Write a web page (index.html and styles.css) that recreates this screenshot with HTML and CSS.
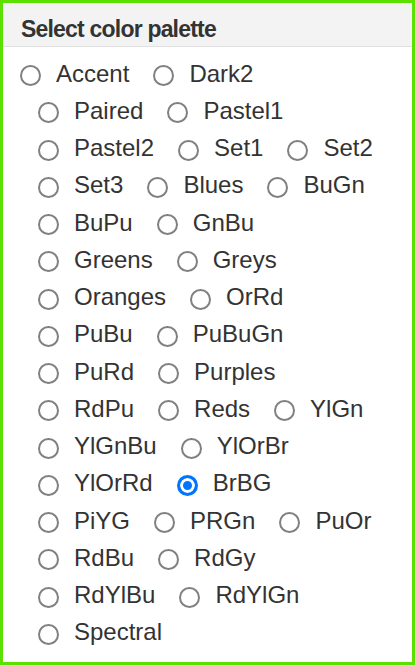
FILE: index.html
```html
<!DOCTYPE html>
<html>
<head>
<meta charset="utf-8">
<link rel="stylesheet" href="styles.css">
</head>
<body>
<div class="panel">
  <div class="panel-head">Select color palette</div>
  <div class="options">
    <div class="row first">
      <label class="opt"><input type="radio" name="pal"><span>Accent</span></label>
      <label class="opt"><input type="radio" name="pal"><span>Dark2</span></label>
    </div>
    <div class="row">
      <label class="opt"><input type="radio" name="pal"><span>Paired</span></label>
      <label class="opt"><input type="radio" name="pal"><span>Pastel1</span></label>
    </div>
    <div class="row">
      <label class="opt"><input type="radio" name="pal"><span>Pastel2</span></label>
      <label class="opt"><input type="radio" name="pal"><span>Set1</span></label>
      <label class="opt"><input type="radio" name="pal"><span>Set2</span></label>
    </div>
    <div class="row">
      <label class="opt"><input type="radio" name="pal"><span>Set3</span></label>
      <label class="opt"><input type="radio" name="pal"><span>Blues</span></label>
      <label class="opt"><input type="radio" name="pal"><span>BuGn</span></label>
    </div>
    <div class="row">
      <label class="opt"><input type="radio" name="pal"><span>BuPu</span></label>
      <label class="opt"><input type="radio" name="pal"><span>GnBu</span></label>
    </div>
    <div class="row">
      <label class="opt"><input type="radio" name="pal"><span>Greens</span></label>
      <label class="opt"><input type="radio" name="pal"><span>Greys</span></label>
    </div>
    <div class="row">
      <label class="opt"><input type="radio" name="pal"><span>Oranges</span></label>
      <label class="opt"><input type="radio" name="pal"><span>OrRd</span></label>
    </div>
    <div class="row">
      <label class="opt"><input type="radio" name="pal"><span>PuBu</span></label>
      <label class="opt"><input type="radio" name="pal"><span>PuBuGn</span></label>
    </div>
    <div class="row">
      <label class="opt"><input type="radio" name="pal"><span>PuRd</span></label>
      <label class="opt"><input type="radio" name="pal"><span>Purples</span></label>
    </div>
    <div class="row">
      <label class="opt"><input type="radio" name="pal"><span>RdPu</span></label>
      <label class="opt"><input type="radio" name="pal"><span>Reds</span></label>
      <label class="opt"><input type="radio" name="pal"><span>YlGn</span></label>
    </div>
    <div class="row">
      <label class="opt"><input type="radio" name="pal"><span>YlGnBu</span></label>
      <label class="opt"><input type="radio" name="pal"><span>YlOrBr</span></label>
    </div>
    <div class="row">
      <label class="opt"><input type="radio" name="pal"><span>YlOrRd</span></label>
      <label class="opt"><input type="radio" name="pal" checked><span>BrBG</span></label>
    </div>
    <div class="row">
      <label class="opt"><input type="radio" name="pal"><span>PiYG</span></label>
      <label class="opt"><input type="radio" name="pal"><span>PRGn</span></label>
      <label class="opt"><input type="radio" name="pal"><span>PuOr</span></label>
    </div>
    <div class="row">
      <label class="opt"><input type="radio" name="pal"><span>RdBu</span></label>
      <label class="opt"><input type="radio" name="pal"><span>RdGy</span></label>
    </div>
    <div class="row">
      <label class="opt"><input type="radio" name="pal"><span>RdYlBu</span></label>
      <label class="opt"><input type="radio" name="pal"><span>RdYlGn</span></label>
    </div>
    <div class="row">
      <label class="opt"><input type="radio" name="pal"><span>Spectral</span></label>
    </div>
  </div>
</div>
</body>
</html>
```

FILE: styles.css
```css
html, body {
  margin: 0;
  padding: 0;
  background: #fff;
}

.panel {
  box-sizing: border-box;
  width: 415px;
  height: 665px;
  border: 3px solid #5ce000;
  font-family: "Liberation Sans", Arial, sans-serif;
  color: #333;
  overflow: hidden;
}

.panel-head {
  box-sizing: border-box;
  height: 44px;
  padding: 9px 18px 0;
  background: #f3f3f3;
  border-bottom: 1px solid #e0e0e0;
  font-size: 23px;
  font-weight: bold;
  line-height: 34px;
  letter-spacing: -0.8px;
  color: #333;
}

.options {
  padding-top: 8px;
}

.row {
  display: flex;
  align-items: center;
  height: 37.25px;
  padding-left: 35px;
  gap: 24px;
}

.row.first {
  padding-left: 17px;
}

.opt {
  display: flex;
  align-items: center;
  gap: 15px;
  font-size: 24px;
  line-height: 28px;
  color: #333;
}

.opt input {
  -webkit-appearance: none;
  appearance: none;
  box-sizing: border-box;
  flex: none;
  width: 21px;
  height: 21px;
  margin: 4px 0 0 0;
  border: 2px solid #808080;
  border-radius: 50%;
  background: #fff;
}

.opt input:checked {
  border: 3px solid #0075ff;
  background: #0075ff;
  box-shadow: inset 0 0 0 3px #fff;
}
```
